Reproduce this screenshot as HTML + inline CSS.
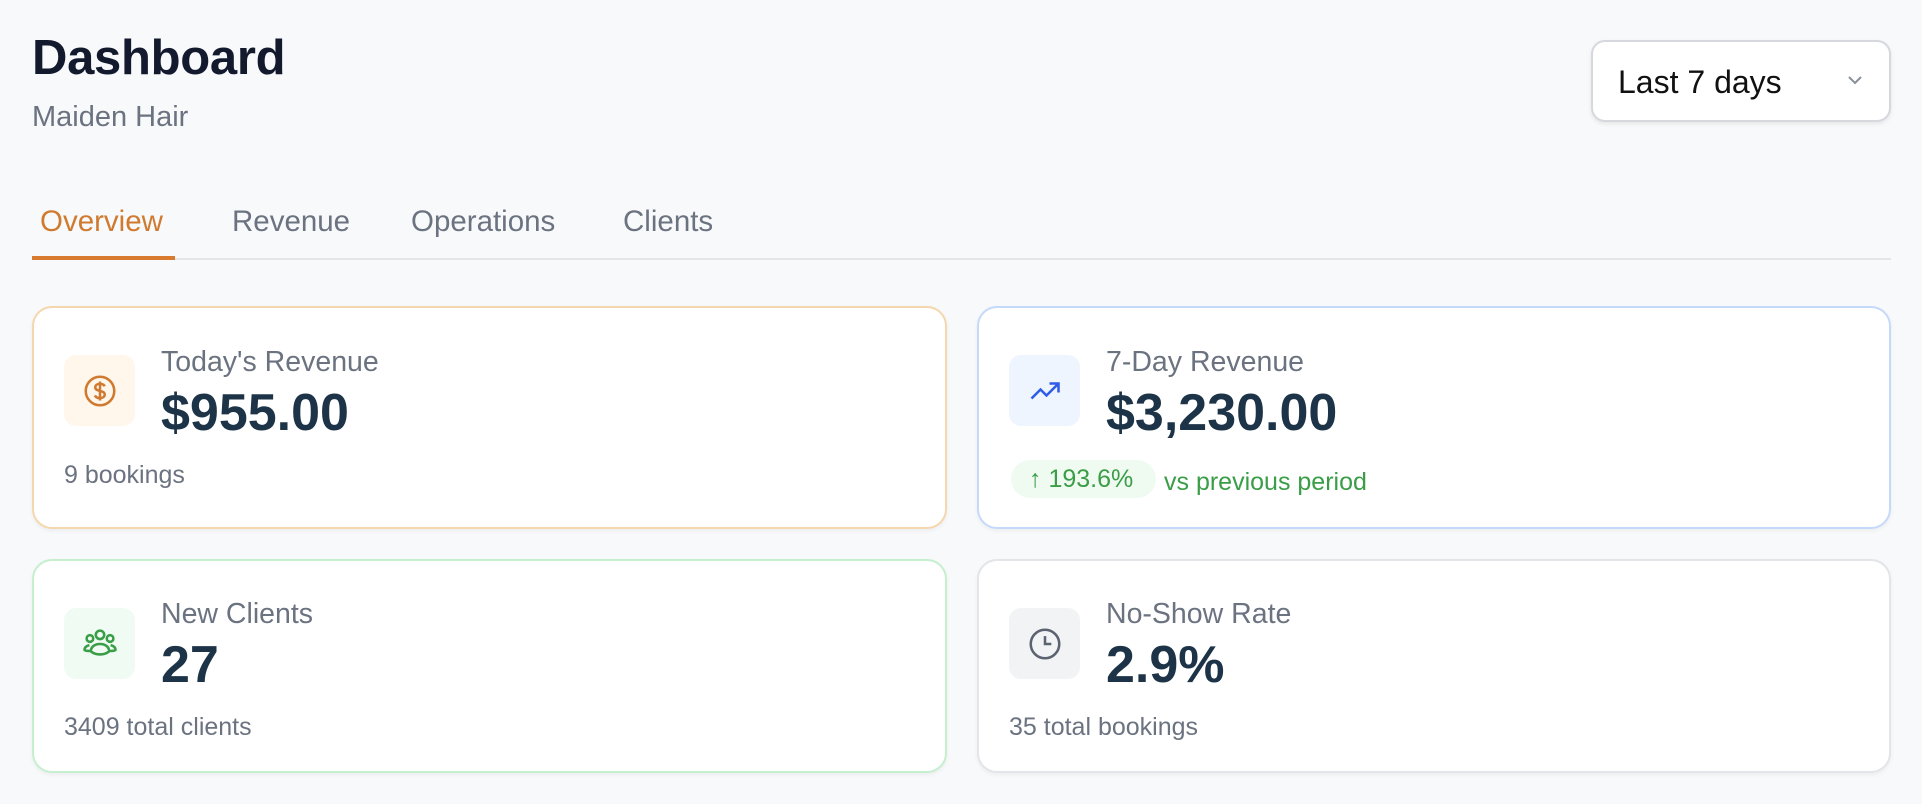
<!DOCTYPE html>
<html><head><meta charset="utf-8"><style>
*{box-sizing:border-box;margin:0;padding:0}
body{width:1922px;height:804px;background:#f8f9fb;font-family:"Liberation Sans",sans-serif;position:relative;overflow:hidden}
.a{position:absolute;white-space:nowrap}
h1{position:absolute;left:32px;top:30px;font-size:49px;font-weight:700;color:#141a2e;letter-spacing:-0.3px}
.sub{left:32px;top:101px;font-size:29px;color:#6b7280}
.dd{position:absolute;left:1591px;top:40px;width:300px;height:82px;background:#fff;border:2px solid #d6d8de;border-radius:14px;box-shadow:0 2px 4px rgba(0,0,0,.08)}
.dd span{position:absolute;left:25px;top:22px;font-size:32px;color:#111}
.tab{top:205px;font-size:29.5px;color:#6b7280}
.line{position:absolute;left:32px;top:258px;width:1859px;height:2px;background:#e3e5e9}
.ul{position:absolute;left:32px;top:256px;width:143px;height:4px;background:#d97b2f}
.card{position:absolute;background:#fff;border:2px solid;border-radius:20px;box-shadow:0 2px 4px rgba(0,0,0,.05)}
.ic{position:absolute;left:30px;width:71px;height:71px;border-radius:12px;display:flex;align-items:center;justify-content:center}
.lab{position:absolute;left:127px;font-size:28.5px;color:#6b7280}
.val{position:absolute;left:127px;font-size:52px;font-weight:700;color:#1d3347}
.s{position:absolute;left:30px;font-size:25px;color:#6b7280}
</style></head><body>
<h1>Dashboard</h1>
<div class="a sub">Maiden Hair</div>
<div class="dd"><span>Last 7 days</span><svg style="position:absolute;left:254px;top:32px" width="16" height="12" viewBox="0 0 16 12"><path d="M2 3l6 6 6-6" fill="none" stroke="#8a9099" stroke-width="2"/></svg></div>
<div class="a tab" style="left:40px;color:#d07a30">Overview</div>
<div class="a tab" style="left:232px">Revenue</div>
<div class="a tab" style="left:411px">Operations</div>
<div class="a tab" style="left:623px">Clients</div>
<div class="line"></div><div class="ul"></div>

<div class="card" style="left:32px;top:306px;width:915px;height:223px;border-color:#f5d7ae">
 <div class="ic" style="top:47px;background:#fff6ec"><svg width="38" height="38" viewBox="0 0 24 24" fill="none" stroke="#d07a30" stroke-width="1.6"><circle cx="12" cy="12" r="9"/><path d="M15 9c-.5-1-1.6-1.5-3-1.5-1.7 0-3 .8-3 2.2 0 3 6 1.5 6 4.5 0 1.4-1.3 2.3-3 2.3-1.5 0-2.7-.6-3.2-1.7M12 6v12"/></svg></div>
 <div class="lab" style="top:38px">Today's Revenue</div>
 <div class="val" style="top:75px">$955.00</div>
 <div class="s" style="top:153px">9 bookings</div>
</div>

<div class="card" style="left:977px;top:306px;width:914px;height:223px;border-color:#c5dafa">
 <div class="ic" style="top:47px;background:#eef5ff"><svg width="36" height="36" viewBox="0 0 24 24" fill="none" stroke="#2f5ce8" stroke-width="1.7"><path d="M3 17l6-6 4 4 8-8M15 7h6v6"/></svg></div>
 <div class="lab" style="top:38px">7-Day Revenue</div>
 <div class="val" style="top:75px">$3,230.00</div>
 <div class="a" style="left:32px;top:152px;width:145px;height:38px;background:#effbf1;border-radius:19px"></div>
 <div class="s" style="left:50px;top:157px;color:#3a9d47">↑ 193.6%</div>
 <div class="s" style="left:185px;top:160px;color:#3a9d47">vs previous period</div>
</div>

<div class="card" style="left:32px;top:559px;width:915px;height:214px;border-color:#c6efcf">
 <div class="ic" style="top:47px;background:#f0fcf3"><svg width="44" height="44" viewBox="0 0 24 24" fill="none" stroke="#3a9d47" stroke-width="1.4"><circle cx="12" cy="7" r="2.3"/><circle cx="6.5" cy="9" r="1.8"/><circle cx="17.5" cy="9" r="1.8"/><path d="M7 16c0-2.5 2.2-4 5-4s5 1.5 5 4c-1.5 1.2-3.2 1.7-5 1.7S8.5 17.2 7 16zM6.2 12.6C4.5 13 3.5 14 3.6 15.3c.8.4 2 .6 3.2.5M17.8 12.6c1.7.4 2.7 1.4 2.6 2.7-.8.4-2 .6-3.2.5"/></svg></div>
 <div class="lab" style="top:37px">New Clients</div>
 <div class="val" style="top:74px">27</div>
 <div class="s" style="top:152px">3409 total clients</div>
</div>

<div class="card" style="left:977px;top:559px;width:914px;height:214px;border-color:#e3e5e9">
 <div class="ic" style="top:47px;background:#f2f3f5"><svg width="38" height="38" viewBox="0 0 24 24" fill="none" stroke="#5b6270" stroke-width="1.6"><circle cx="12" cy="12" r="9"/><path d="M12 7v5h4"/></svg></div>
 <div class="lab" style="top:37px">No-Show Rate</div>
 <div class="val" style="top:74px">2.9%</div>
 <div class="s" style="top:152px">35 total bookings</div>
</div>
</body></html>
